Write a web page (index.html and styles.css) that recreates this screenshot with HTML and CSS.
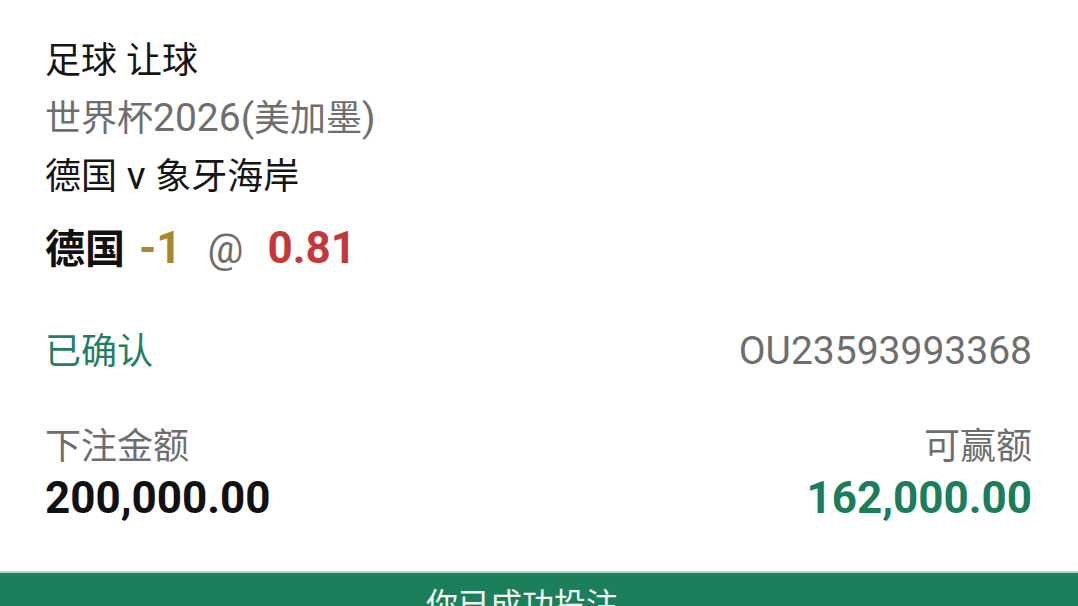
FILE: index.html
```html
<!DOCTYPE html>
<html lang="zh-CN">
<head>
<meta charset="utf-8">
<link rel="stylesheet" href="styles.css">
</head>
<body>
<main class="slip">
  <section class="info">
    <div class="line title"><span class="cjk">足球 让球</span></div>
    <div class="line league"><span class="cjk">世界杯</span>2026(<span class="cjk">美加墨</span>)</div>
    <div class="line match"><span class="cjk">德国</span> v <span class="cjk">象牙海岸</span></div>
    <div class="pick">
      <span class="team">德国</span>
      <span class="hdp">-1</span>
      <span class="at">@</span>
      <span class="odds">0.81</span>
    </div>
  </section>
  <section class="status-row">
    <span class="status cjk">已确认</span>
    <span class="ref">OU23593993368</span>
  </section>
  <section class="amounts">
    <div class="amount">
      <div class="label cjk">下注金额</div>
      <div class="value">200,000.00</div>
    </div>
    <div class="amount right">
      <div class="label cjk">可赢额</div>
      <div class="value win">162,000.00</div>
    </div>
  </section>
</main>
<footer class="bar">
  <span class="bar-text">你已成功投注</span>
</footer>
</body>
</html>
```
FILE: styles.css
```css
html, body {
  margin: 0;
  padding: 0;
  background: #ffffff;
}
body {
  font-family: "Roboto", "Noto Sans CJK SC", sans-serif;
  color: #151515;
  width: 1078px;
  height: 606px;
  overflow: hidden;
  display: flex;
  flex-direction: column;
}
.slip {
  box-sizing: border-box;
  padding: 31px 46px 0 45px;
  flex: 0 0 571px;
}
.info {
  display: flex;
  flex-direction: column;
}
.line {
  font-size: 39px;
  line-height: 58px;
  height: 58px;
}
.cjk {
  font-size: 36px;
}
.league {
  color: #6e6e6e;
}
.pick {
  margin-top: 13px;
  height: 60px;
  line-height: 60px;
  font-size: 44px;
  font-weight: 700;
  display: flex;
  align-items: baseline;
}
.team {
  font-size: 40px;
  color: #111;
}
.hdp {
  color: #a8882e;
  margin-left: 14px;
}
.at {
  color: #6e6e6e;
  font-weight: 400;
  margin-left: 26px;
  font-size: 40px;
}
.odds {
  color: #c5383a;
  margin-left: 24px;
}
.status-row {
  margin-top: 48px;
  display: flex;
  justify-content: space-between;
  align-items: baseline;
  font-size: 39px;
  line-height: 50px;
  height: 50px;
}
.status {
  color: #1f8060;
}
.ref {
  color: #6e6e6e;
}
.amounts {
  margin-top: 46px;
  display: flex;
  justify-content: space-between;
}
.amount {
  display: flex;
  flex-direction: column;
}
.amount.right {
  align-items: flex-end;
}
.label {
  font-size: 36px;
  line-height: 50px;
  color: #6e6e6e;
}
.value {
  font-size: 44px;
  font-weight: 700;
  line-height: 52px;
  color: #111;
}
.value.win {
  color: #1b7d5c;
}
.bar {
  flex: 0 0 80px;
  background: #1b7f5c;
  border-top: 2px solid #a9dcc6;
  display: flex;
  justify-content: center;
  padding-right: 34px;
}
.bar-text {
  color: #f2f7f4;
  font-size: 32px;
  line-height: 32px;
  padding-top: 16px;
}
```
